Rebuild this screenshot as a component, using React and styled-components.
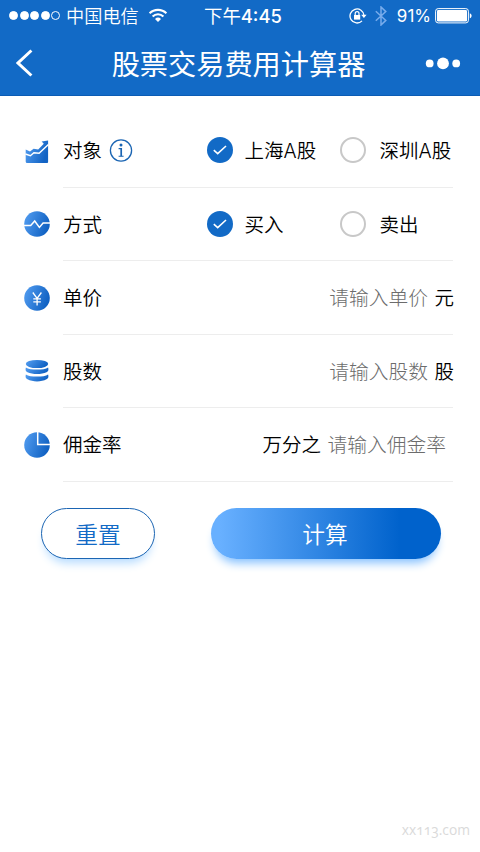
import { useState } from "react";
import styled, { createGlobalStyle } from "styled-components";

const GlobalStyle = createGlobalStyle`
  * {
    box-sizing: border-box;
  }
  body {
    margin: 0;
    background: #fff;
    font-family: "Noto Sans CJK SC", sans-serif;
  }
`;

const IconDefs = () => (
  <HiddenSvg width="0" height="0">
    <defs>
      <linearGradient id="blue" x1="0" y1="0" x2="1" y2="0.35">
        <stop offset="0" stopColor="#559ff2" />
        <stop offset="1" stopColor="#1263c4" />
      </linearGradient>
    </defs>
  </HiddenSvg>
);

const WifiIcon = () => (
  <svg width="20" height="15" viewBox="0 0 20 15" fill="none" stroke="#fff">
    <path d="M1.6 5.3a12 12 0 0 1 16.8 0" strokeWidth="2.1" />
    <path d="M4.6 8.4a7.7 7.7 0 0 1 10.8 0" strokeWidth="2.1" />
    <path d="M10 14l-3-3.1a4.3 4.3 0 0 1 6 0z" fill="#fff" stroke="none" />
  </svg>
);

const LockIcon = () => (
  <svg width="18" height="16" viewBox="0 0 18 16" fill="none" stroke="#fff">
    <path d="M13 12.9A7 7 0 1 1 15 7.5" strokeWidth="1.3" />
    <path d="M12.2 6.8h5.4L14.9 10z" fill="#fff" stroke="none" />
    <rect x="5" y="7" width="6.2" height="4.6" fill="#fff" stroke="none" />
    <path d="M6.2 7.2V5.6a1.9 1.9 0 0 1 3.8 0v1.6" strokeWidth="1.2" />
  </svg>
);

const BluetoothIcon = () => (
  <svg width="12" height="20" viewBox="0 0 12 20" fill="none" stroke="#78acec">
    <path d="M.8 5.2l10 9.2L6 19V1l4.8 4.6L.8 14.8" strokeWidth="1.5" />
  </svg>
);

const BatteryIcon = () => (
  <svg width="37" height="16" viewBox="0 0 37 16">
    <rect x=".6" y=".6" width="32.8" height="14.3" rx="2.6" fill="none" stroke="#fff" />
    <rect x="2" y="2" width="30" height="11.5" rx="1.3" fill="#fff" />
    <path d="M34.8 5.2c2.4.8 2.4 4.3 0 5.1z" fill="#fff" />
  </svg>
);

const BackIcon = () => (
  <svg width="17" height="28" viewBox="0 0 17 28" fill="none">
    <path d="M15.4 1.5L2 14l13.4 12.5" stroke="#fff" strokeWidth="3" />
  </svg>
);

const MoreIcon = () => (
  <svg width="36" height="14" viewBox="0 0 36 14" fill="#fff">
    <circle cx="4.7" cy="7.4" r="3.9" />
    <circle cx="18" cy="7.4" r="5.9" />
    <circle cx="31.2" cy="7.4" r="3.9" />
  </svg>
);

const InfoIcon = () => (
  <svg width="24" height="24" viewBox="0 0 24 24" fill="none" stroke="#1b65b3">
    <circle cx="12" cy="12.5" r="10.6" strokeWidth="1.3" />
    <circle cx="12" cy="7.1" r="1.5" fill="#1b65b3" stroke="none" />
    <path d="M12.2 10v8.2" strokeWidth="1.7" />
    <path d="M9.6 10.6h2.7M9.6 18.2h5" strokeWidth="1.1" />
  </svg>
);

const TrendIcon = () => (
  <svg width="26" height="26" viewBox="0 0 26 26">
    <path
      d="M1.7 11.4l4.3 2 3.6-2.6 4.6.6 5.6-5.6-2.2-2.2 6.5-1.1v21.6a1 1 0 0 1-1 1H3.3a1.5 1.5 0 0 1-1.6-1.5z"
      fill="url(#blue)"
    />
    <path d="M1.4 16l5 1.7 3.5-2.9 5.2.4 9.3-8.8" fill="none" stroke="#fff" strokeWidth="1.4" />
  </svg>
);

const PulseIcon = () => (
  <svg width="26" height="26" viewBox="0 0 26 26">
    <circle cx="13" cy="13" r="12.8" fill="url(#blue)" />
    <path d="M0 14.5h6.7l4-4.5 4.7 6.4 3.7-4.3H26" fill="none" stroke="#fff" strokeWidth="1.5" />
  </svg>
);

const YuanIcon = () => (
  <svg width="26" height="26" viewBox="0 0 26 26">
    <circle cx="13" cy="13" r="12.8" fill="url(#blue)" />
    <path
      d="M8.8 7.5l4.3 6 4.3-6M13.1 13.5v7M9.3 13.8h7.6M9.3 16.8h7.6"
      fill="none"
      stroke="#fff"
      strokeWidth="1.3"
    />
  </svg>
);

const CoinsIcon = () => (
  <svg width="26" height="26" viewBox="0 0 26 26" fill="url(#blue)">
    <ellipse cx="13" cy="6" rx="11.2" ry="4.1" />
    <path d="M1.9 9.4c4 2.9 18.2 2.9 22.2 0 .8 2.2.2 4-1.6 4.9-5 2.4-14 2.4-19 0-1.8-.9-2.4-2.7-1.6-4.9z" />
    <path d="M1.9 16.4c4 2.9 18.2 2.9 22.2 0 .8 2.2.2 4-1.6 4.9-5 2.8-14 2.8-19 0-1.8-.9-2.4-2.7-1.6-4.9z" />
  </svg>
);

const PieIcon = () => (
  <svg width="26" height="26" viewBox="0 0 26 26">
    <circle cx="13" cy="13" r="12.8" fill="url(#blue)" />
    <path d="M13.7 0v12.5H26" fill="none" stroke="#fff" strokeWidth="1.5" />
  </svg>
);

const RadioOption = ({ checked, children, onClick }) => (
  <Option onClick={onClick}>
    <Circle $checked={checked}>
      {checked && (
        <svg width="14" height="12" viewBox="0 0 14 12" fill="none">
          <path d="M.8 6.2l3.9 3.5L13 2" stroke="#fff" strokeWidth="1.6" />
        </svg>
      )}
    </Circle>
    <OptionText>{children}</OptionText>
  </Option>
);

const FormRow = ({ icon, label, info, children }) => (
  <Row>
    <IconCell>{icon}</IconCell>
    <RowBody>
      <Label>
        {label}
        {info && <InfoIcon />}
      </Label>
      {children}
    </RowBody>
  </Row>
);

export default function App() {
  const [market, setMarket] = useState("sh");
  const [side, setSide] = useState("buy");

  return (
    <Page>
      <GlobalStyle />
      <IconDefs />
      <Header>
        <StatusBar>
          <Carrier>
            <Signal>
              <Dot />
              <Dot />
              <Dot />
              <Dot />
              <Dot $empty />
            </Signal>
            <span>中国电信</span>
            <WifiIcon />
          </Carrier>
          <Time>
            下午<Digits>4:45</Digits>
          </Time>
          <Indicators>
            <LockIcon />
            <BluetoothIcon />
            <Percent>91%</Percent>
            <BatteryIcon />
          </Indicators>
        </StatusBar>
        <NavBar>
          <BackIcon />
          <Title>股票交易费用计算器</Title>
          <MoreIcon />
        </NavBar>
      </Header>

      <Form>
        <FormRow icon={<TrendIcon />} label="对象" info>
          <Options>
            <RadioOption checked={market === "sh"} onClick={() => setMarket("sh")}>
              上海A股
            </RadioOption>
            <RadioOption checked={market === "sz"} onClick={() => setMarket("sz")}>
              深圳A股
            </RadioOption>
          </Options>
        </FormRow>
        <FormRow icon={<PulseIcon />} label="方式">
          <Options>
            <RadioOption checked={side === "buy"} onClick={() => setSide("buy")}>
              买入
            </RadioOption>
            <RadioOption checked={side === "sell"} onClick={() => setSide("sell")}>
              卖出
            </RadioOption>
          </Options>
        </FormRow>
        <FormRow icon={<YuanIcon />} label="单价">
          <Field>
            <Hint>请输入单价</Hint>
            <Unit>元</Unit>
          </Field>
        </FormRow>
        <FormRow icon={<CoinsIcon />} label="股数">
          <Field>
            <Hint>请输入股数</Hint>
            <Unit>股</Unit>
          </Field>
        </FormRow>
        <FormRow icon={<PieIcon />} label="佣金率">
          <Field $inset>
            <Unit>万分之</Unit>
            <Hint>请输入佣金率</Hint>
          </Field>
        </FormRow>
      </Form>

      <Actions>
        <ResetButton type="button">重置</ResetButton>
        <SubmitButton type="button">计算</SubmitButton>
      </Actions>

      <Watermark>xx113.com</Watermark>
    </Page>
  );
}

const HiddenSvg = styled.svg`
  position: absolute;
`;

const Page = styled.div`
  display: flex;
  flex-direction: column;
  width: 480px;
  height: 852px;
  overflow: hidden;
  background: #fff;
  color: #000;
`;

const Header = styled.header`
  height: 96px;
  background: #126ac6;
  border-bottom: 1px solid #0b5cb4;
  color: #fff;
`;

const StatusBar = styled.div`
  display: grid;
  grid-template-columns: 195px 96px 1fr;
  align-items: center;
  height: 31px;
  padding: 0 8px 0 9px;
  font-size: 18.2px;
  line-height: 28px;
  font-weight: 350;
`;

const Carrier = styled.div`
  display: flex;
  align-items: center;

  span {
    padding-bottom: 2px;
  }

  svg {
    margin-left: 9px;
  }
`;

const Signal = styled.div`
  display: flex;
  gap: 1.5px;
  margin-right: 6px;
`;

const Dot = styled.i`
  width: 9px;
  height: 9px;
  border-radius: 50%;
  border: 1px solid #fff;
  background: ${(props) => (props.$empty ? "transparent" : "#fff")};
`;

const Time = styled.span`
  white-space: nowrap;
  font-family: Inter, "Noto Sans CJK SC", sans-serif;
  font-size: 18.4px;
  font-weight: 400;
`;

const Digits = styled.span`
  font-weight: 500;
`;

const Indicators = styled.div`
  display: flex;
  align-items: center;
  justify-content: flex-end;

  svg:nth-child(2) {
    margin-left: 8px;
  }
`;

const Percent = styled.span`
  margin: 0 4px 0 10px;
  font-family: Inter, sans-serif;
  font-weight: 400;
  font-size: 17px;
`;

const NavBar = styled.div`
  display: flex;
  align-items: center;
  justify-content: space-between;
  height: 64px;
  padding: 0 19px 0 16px;
`;

const Title = styled.h1`
  margin: 0 0 0 19px;
  font-size: 28.2px;
  line-height: 40px;
  font-weight: 400;
`;

const Form = styled.main`
  padding: 18px 27px 0 24px;
`;

const Row = styled.div`
  display: flex;
  height: 73.5px;
`;

const IconCell = styled.div`
  display: flex;
  align-items: center;
  width: 39px;
`;

const RowBody = styled.div`
  display: flex;
  flex: 1;
  align-items: center;
  border-bottom: 1px solid #ededed;
  font-size: 19.5px;
  line-height: 30px;
  font-weight: 350;
  white-space: nowrap;
`;

const Label = styled.div`
  display: flex;
  align-items: center;
  gap: 7px;
  width: 143.5px;
`;

const Options = styled.div`
  display: grid;
  grid-template-columns: 133.5px 1fr;
  font-family: Inter, "Noto Sans CJK SC", sans-serif;
`;

const Option = styled.div`
  display: flex;
  align-items: center;
  gap: 12px;

  &:nth-child(2) {
    gap: 13.5px;
  }
`;

const OptionText = styled.span`
  padding-top: 2px;
`;

const Circle = styled.span`
  display: flex;
  align-items: center;
  justify-content: center;
  width: 26px;
  height: 26px;
  border-radius: 50%;
  border: ${(props) => (props.$checked ? "none" : "2.5px solid #c8c8c8")};
  background: ${(props) => (props.$checked ? "#126ac6" : "#fff")};
`;

const Field = styled.div`
  display: flex;
  flex: 1;
  justify-content: flex-end;
  gap: 6.5px;
  margin-right: ${(props) => (props.$inset ? "7px" : "-1px")};
`;

const Hint = styled.span`
  color: #6c6c6c;
  font-size: 19.75px;
  font-weight: 300;
`;

const Unit = styled.span`
  color: #000;
`;

const Actions = styled.div`
  display: flex;
  justify-content: space-between;
  padding: 26px 39px 0 41px;
`;

const Button = styled.button`
  height: 51px;
  padding: 2px 0 0;
  border-radius: 26px;
  font-family: inherit;
  font-size: 22.7px;
  line-height: 30px;
  font-weight: 350;
`;

const ResetButton = styled(Button)`
  width: 114px;
  border: 1.5px solid #1b65b3;
  background: #fff;
  color: #126ac6;
  box-shadow: 0 8px 10px -4px #b5dbff;
`;

const SubmitButton = styled(Button)`
  width: 230px;
  padding-right: 2px;
  border: none;
  background: linear-gradient(90deg, #68b0ff 4%, #0062cc 82%);
  color: #fff;
  box-shadow: 0 8px 10px -4px #85c1ff;
`;

const Watermark = styled.footer`
  margin-top: auto;
  padding: 0 10px 12px 0;
  text-align: right;
  font-family: "Open Sans", sans-serif;
  font-feature-settings: "onum";
  font-size: 13.8px;
  line-height: 20px;
  color: #dadada;
`;
